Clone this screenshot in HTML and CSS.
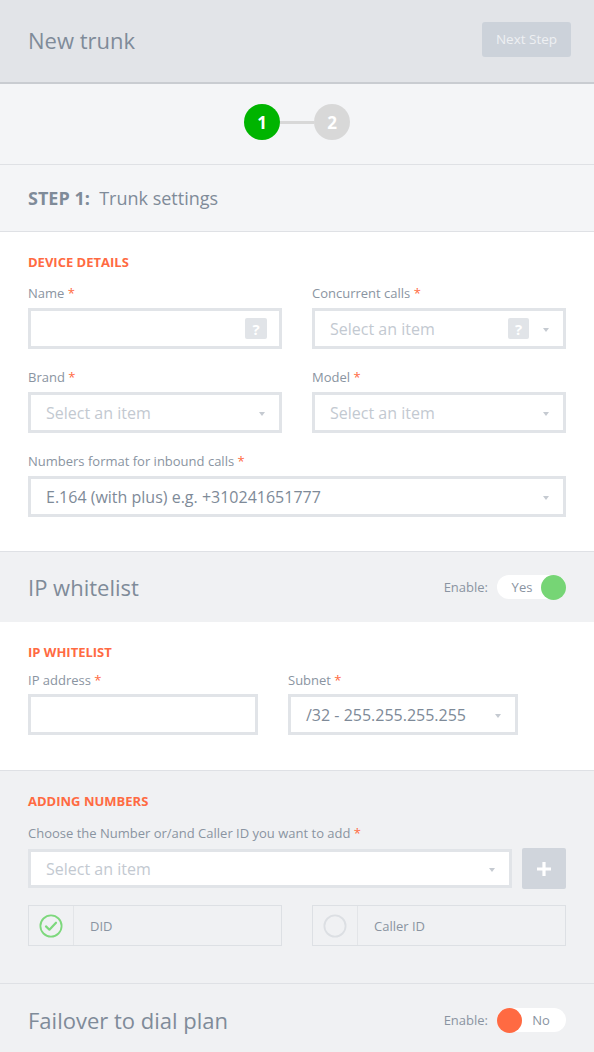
FILE: index.html
```html
<!DOCTYPE html>
<html lang="en">
<head>
<meta charset="utf-8">
<title>New trunk</title>
<link rel="stylesheet" href="styles.css">
</head>
<body>
<header class="topbar">
  <h1 class="page-title">New trunk</h1>
  <button class="btn-next" type="button">Next Step</button>
</header>

<div class="stepper">
  <span class="step-dot active">1</span>
  <span class="step-line"></span>
  <span class="step-dot">2</span>
</div>

<div class="step-title"><b>STEP 1:</b>&nbsp; Trunk settings</div>

<section class="panel white device">
  <h2 class="group-title">DEVICE DETAILS</h2>
  <div class="grid two">
    <div class="field">
      <label class="label">Name <span class="req">*</span></label>
      <div class="input"><span class="spacer"></span><span class="help">?</span></div>
    </div>
    <div class="field">
      <label class="label">Concurrent calls <span class="req">*</span></label>
      <div class="input select"><span class="placeholder">Select an item</span><span class="help">?</span><span class="caret"></span></div>
    </div>
    <div class="field">
      <label class="label">Brand <span class="req">*</span></label>
      <div class="input select"><span class="placeholder">Select an item</span><span class="caret"></span></div>
    </div>
    <div class="field">
      <label class="label">Model <span class="req">*</span></label>
      <div class="input select"><span class="placeholder">Select an item</span><span class="caret"></span></div>
    </div>
    <div class="field full">
      <label class="label">Numbers format for inbound calls <span class="req">*</span></label>
      <div class="input select"><span class="value">E.164 (with plus) e.g. +310241651777</span><span class="caret"></span></div>
    </div>
  </div>
</section>

<div class="section-head">
  <h2 class="section-name">IP whitelist</h2>
  <div class="enable">
    <span class="enable-label">Enable:</span>
    <span class="toggle on"><span class="toggle-text">Yes</span><span class="knob"></span></span>
  </div>
</div>

<section class="panel white ip">
  <h2 class="group-title">IP WHITELIST</h2>
  <div class="grid ip-grid">
    <div class="field">
      <label class="label">IP address <span class="req">*</span></label>
      <div class="input"></div>
    </div>
    <div class="field">
      <label class="label">Subnet <span class="req">*</span></label>
      <div class="input select"><span class="value">/32 - 255.255.255.255</span><span class="caret"></span></div>
    </div>
  </div>
</section>

<section class="panel grey numbers">
  <h2 class="group-title">ADDING NUMBERS</h2>
  <label class="label">Choose the Number or/and Caller ID you want to add <span class="req">*</span></label>
  <div class="add-row">
    <div class="input select grow"><span class="placeholder">Select an item</span><span class="caret"></span></div>
    <button class="btn-add" type="button">
      <svg width="16" height="16" viewBox="0 0 16 16"><path d="M8 1v14M1 8h14" stroke="#fff" stroke-width="3.2"/></svg>
    </button>
  </div>
  <div class="grid two tiles">
    <div class="tile">
      <span class="tile-mark">
        <svg width="24" height="24" viewBox="0 0 24 24"><circle cx="12" cy="12" r="10.6" fill="none" stroke="#7dd87c" stroke-width="1.8"/><path d="M7 12.4l3.4 3.3 6.6-7" fill="none" stroke="#7dd87c" stroke-width="2.2" stroke-linecap="round" stroke-linejoin="round"/></svg>
      </span>
      <span class="tile-text">DID</span>
    </div>
    <div class="tile">
      <span class="tile-mark">
        <svg width="24" height="24" viewBox="0 0 24 24"><circle cx="12" cy="12" r="10.6" fill="none" stroke="#dcdfe3" stroke-width="1.8"/></svg>
      </span>
      <span class="tile-text">Caller ID</span>
    </div>
  </div>
</section>

<div class="section-head last">
  <h2 class="section-name">Failover to dial plan</h2>
  <div class="enable">
    <span class="enable-label">Enable:</span>
    <span class="toggle off"><span class="knob"></span><span class="toggle-text">No</span></span>
  </div>
</div>
</body>
</html>
```

FILE: styles.css
```css
* { box-sizing: border-box; }

html, body {
  margin: 0;
  padding: 0;
}

body {
  font-family: "Open Sans", "Noto Sans", sans-serif;
  color: #7f8b99;
  background: #f0f1f3;
  width: 594px;
  overflow: hidden;
}

h1, h2 { margin: 0; font-weight: 400; }

/* top bar */
.topbar {
  height: 84px;
  background: #e2e4e8;
  border-bottom: 2px solid #c9ccd1;
  display: flex;
  align-items: center;
  justify-content: space-between;
  padding: 0 23px 2px 28px;
}

.page-title {
  font-size: 22px;
  line-height: 30px;
  color: #7f8b99;
}

.btn-next {
  width: 89px;
  height: 35px;
  margin-top: -2px;
  border: 0;
  border-radius: 3px;
  background: #ccd2da;
  color: #eef0f3;
  font-family: inherit;
  font-size: 13.5px;
  padding: 0;
}

/* wizard steps */
.stepper {
  height: 81px;
  background: #f4f5f7;
  border-bottom: 1px solid #dfe1e5;
  display: flex;
  align-items: center;
  justify-content: center;
  padding-bottom: 4px;
}

.step-dot {
  width: 36px;
  height: 36px;
  border-radius: 50%;
  background: #d8d8d8;
  color: #fff;
  font-weight: 700;
  font-size: 17px;
  display: flex;
  align-items: center;
  justify-content: center;
}

.step-dot.active { background: #00b400; }

.step-line {
  width: 34px;
  height: 3px;
  background: #d8d8d8;
}

.step-title {
  height: 67px;
  background: #f4f5f7;
  border-bottom: 1px solid #dfe1e5;
  display: flex;
  align-items: center;
  padding: 0 28px;
  font-size: 18px;
  color: #7f8b99;
}

.step-title b { font-weight: 700; }

/* form panels */
.panel {
  padding: 22px 28px 35px;
  border-bottom: 1px solid #dfe1e5;
}

.panel.white { background: #fff; }
.panel.grey { background: #f0f1f3; }

.group-title {
  font-size: 13px;
  font-weight: 700;
  color: #ff6a42;
  line-height: 16px;
  margin-bottom: 14px;
}

.device { padding-bottom: 34px; }

.grid { display: grid; }
.grid.two {
  grid-template-columns: 254px 254px;
  column-gap: 30px;
  row-gap: 19px;
}
.grid .full { grid-column: 1 / 3; }

.ip-grid {
  grid-template-columns: 230px 230px;
  column-gap: 30px;
}

.label {
  display: block;
  font-size: 13px;
  line-height: 18px;
  color: #8a94a1;
  margin-bottom: 6px;
}

.req { color: #ff6a42; }

.input {
  height: 41px;
  border: 3px solid #e1e4e8;
  background: #fff;
  display: flex;
  align-items: center;
  padding: 0 12px 0 15px;
  font-size: 16px;
}

.spacer { flex: 1; }

.placeholder { color: #c3c9d1; flex: 1; }
.value { color: #7e8a98; flex: 1; }

.help {
  width: 22px;
  height: 21px;
  border-radius: 2px;
  background: #e1e4e8;
  color: #fff;
  font-weight: 700;
  font-size: 15px;
  display: flex;
  align-items: center;
  justify-content: center;
}

.select .help { width: 21px; margin-right: 14px; }

.caret {
  width: 0;
  height: 0;
  border-left: 3.5px solid transparent;
  border-right: 3.5px solid transparent;
  border-top: 4px solid #c5cad1;
  margin-right: 2px;
  margin-top: 2px;
}

/* section headers with toggles */
.section-head {
  height: 70px;
  background: #f0f1f3;
  display: flex;
  align-items: center;
  justify-content: space-between;
  padding: 0 28px;
}

.section-head.last { height: 72px; }

.section-name {
  font-size: 22px;
  line-height: 30px;
  color: #7f8b99;
}

.enable {
  display: flex;
  align-items: center;
  gap: 9px;
}

.enable-label {
  font-size: 13px;
  color: #8a94a1;
}

.toggle {
  width: 69px;
  height: 24px;
  border-radius: 12px;
  background: #fff;
  display: flex;
  align-items: center;
  font-size: 13px;
  color: #8a94a1;
}

.toggle.on { justify-content: flex-end; }

.toggle-text { flex: 1; text-align: center; }
.toggle.on .toggle-text { padding-left: 6px; }
.toggle.off .toggle-text { padding-right: 6px; }

.knob {
  width: 25px;
  height: 25px;
  border-radius: 50%;
}

.toggle.on .knob { background: #76d575; }
.toggle.off .knob { background: #ff6a42; }

.ip .group-title { margin-bottom: 11px; }
.ip .label { margin-bottom: 5px; }

/* numbers block */
.numbers { padding-top: 22px; padding-bottom: 37px; }

.numbers .group-title { margin-bottom: 15px; }

.add-row {
  display: flex;
  gap: 10px;
  align-items: center;
  margin-bottom: 16px;
}

.input.grow { flex: 1; height: 39px; }

.btn-add {
  width: 44px;
  height: 41px;
  border: 0;
  border-radius: 2px;
  background: #d0d5dc;
  padding: 0;
  display: flex;
  align-items: center;
  justify-content: center;
}

.tiles { row-gap: 0; }

.tile {
  height: 41px;
  border: 1px solid #dde0e4;
  display: flex;
  align-items: stretch;
}

.tile-mark {
  width: 45px;
  border-right: 1px solid #e3e5e8;
  display: flex;
  align-items: center;
  justify-content: center;
}

.tile-text {
  display: flex;
  align-items: center;
  padding-left: 16px;
  font-size: 13px;
  color: #8a94a1;
}
```
